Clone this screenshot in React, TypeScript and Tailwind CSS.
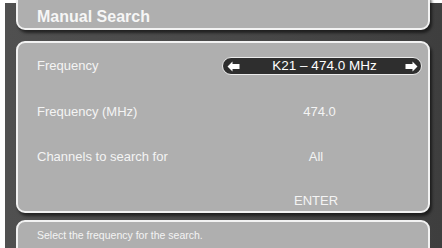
import React from "react";

const font = { fontFamily: '"Liberation Sans", Arial, sans-serif' };

function Arrow({ dir }: { dir: "left" | "right" }) {
  return (
    <svg width="13" height="11" viewBox="0 0 13 11" className={dir === "right" ? "rotate-180" : ""}>
      <path d="M0.5 5.5 L5.5 0.5 V3 H12.5 V8 H5.5 V10.5 Z" fill="#ffffff" />
    </svg>
  );
}

export default function App() {
  return (
    <div
      className="w-[442px] h-[248px] bg-white overflow-hidden pl-[5px] pt-[3px]"
      style={font}
    >
      <div className="w-full h-full bg-[linear-gradient(to_right,#505050,#474747_60%,#3e3e3e)] pl-[11px] pr-[12px] flex flex-col">
        {/* Header panel */}
        <div className="-mt-[12px] h-[39px] shrink-0 bg-[#afafaf] border-2 border-[#f2f2f2] rounded-[9px] shadow-[2px_3px_3px_rgba(0,0,0,0.55)] flex items-end pl-[19px] pb-[1px]">
          <span className="text-[16px] font-bold text-[#f6f6f6] leading-[20px]">Manual Search</span>
        </div>

        {/* Main panel */}
        <div className="mt-[11px] h-[172px] shrink-0 bg-[#afafaf] border-2 border-[#f2f2f2] rounded-[9px] shadow-[2px_3px_3px_rgba(0,0,0,0.55)] pl-[19px] text-[13px] text-[#f4f4f4]">
          <div className="flex items-center h-[46px]">
            <div className="w-[185px]">Frequency</div>
            <div className="w-[200px] h-[18px] bg-[#2e2e2e] border border-[#ececec] rounded-full flex items-center justify-between pl-[4px] pr-[3px]">
              <Arrow dir="left" />
              <span className="leading-[16px] text-[13.5px] text-white pl-[4px]">K21 – 474.0 MHz</span>
              <Arrow dir="right" />
            </div>
          </div>
          <div className="flex items-center h-[45px]">
            <div className="w-[185px]">Frequency (MHz)</div>
            <div className="w-[200px] text-center pr-[5px]">474.0</div>
          </div>
          <div className="flex items-center h-[45px]">
            <div className="w-[185px]">Channels to search for</div>
            <div className="w-[200px] text-center pr-[12px]">All</div>
          </div>
          <div className="flex items-center h-[44px]">
            <div className="w-[185px]"></div>
            <div className="w-[200px] text-center pr-[12px]">ENTER</div>
          </div>
        </div>

        {/* Bottom panel */}
        <div className="mt-[7px] h-[40px] shrink-0 bg-[#afafaf] border-2 border-[#f2f2f2] rounded-[9px] pl-[19px] pt-0">
          <span className="text-[10.5px] leading-[14px] text-[#f4f4f4]">Select the frequency for the search.</span>
        </div>
      </div>
    </div>
  );
}
